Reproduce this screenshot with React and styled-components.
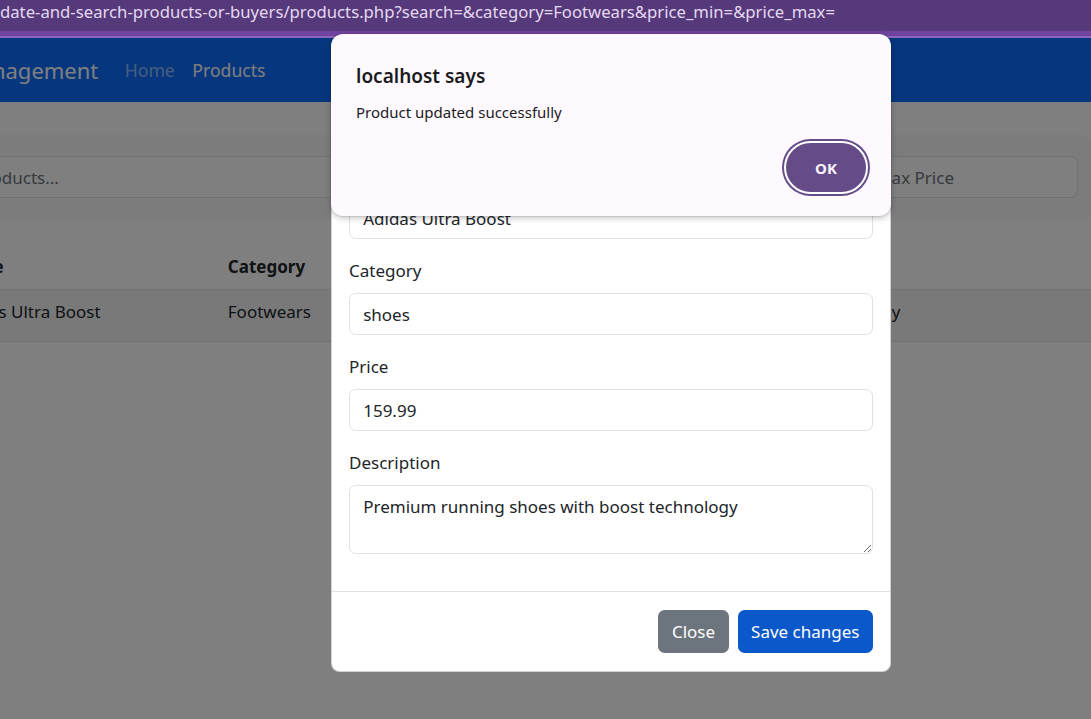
import React from 'react';
import styled, { createGlobalStyle } from 'styled-components';

const FONT = `"Noto Sans", "Open Sans", sans-serif`;
const FS = '17px';

const Global = createGlobalStyle`
  html, body { margin: 0; padding: 0; }
  body { font-family: ${FONT}; width: 1091px; height: 719px; overflow: hidden; background: #fff; color: #212529; }
  * { box-sizing: border-box; }
`;

const Screen = styled.div`
  position: relative;
  width: 1091px;
  height: 719px;
  overflow: hidden;
  display: flex;
  flex-direction: column;
`;

const AddressBar = styled.div`
  height: 31px;
  flex: none;
  background: #56397a;
  color: #e4d8f0;
  font-size: 16.7px;
  line-height: 24px;
  white-space: nowrap;
  overflow: hidden;
`;

const TabStripe = styled.div`
  height: 7px;
  flex: none;
  background: #7043a0;
  border-bottom: 2px solid #8d66b9;
`;

const Viewport = styled.div`
  position: relative;
  flex: 1;
  overflow: hidden;
  background: #fff;
`;

const Page = styled.div`
  margin-left: -140px;
  width: 1250px;
`;

const Navbar = styled.nav`
  display: flex;
  align-items: center;
  height: 64px;
  padding: 0 13px;
  background: #0d6efd;
`;

const Brand = styled.span`
  font-size: 22px;
  color: #fff;
  margin-right: 17.6px;
`;

const NavLink = styled.span`
  font-size: 17.6px;
  padding: 0 8.8px;
  color: ${p => (p.$active ? '#fff' : 'rgba(255,255,255,.55)')};
`;

const Container = styled.div`
  padding: 33px 19px 0 29px;
`;

const FilterBand = styled.div`
  display: flex;
  gap: 13px;
  padding: 21px 13px 22px;
  background: #f8f9fa;
  border-radius: 6px;
`;

const FilterInput = styled.input`
  height: 42px;
  flex: ${p => (p.$grow ? 1 : 'none')};
  width: ${p => p.$w || 'auto'};
  border: 1px solid #dee2e6;
  border-radius: 6.6px;
  padding: 0 13.2px;
  font: inherit;
  font-size: ${FS};
  color: #212529;
  background: #fff;
  &::placeholder { color: #6c757d; }
`;

const Table = styled.table`
  margin-top: 25px;
  width: 100%;
  border-collapse: collapse;
  table-layout: fixed;
  font-size: ${FS};
`;

const Th = styled.th`
  text-align: left;
  font-weight: 700;
  padding: 8.8px;
  line-height: 26.4px;
  border-bottom: 1px solid #dee2e6;
  width: ${p => p.$w || 'auto'};
  white-space: nowrap;
  overflow: hidden;
`;

const Td = styled.td`
  padding: 8.8px 8.8px 16px;
  line-height: 26.4px;
  border-bottom: 1px solid #dee2e6;
  background: #f2f2f2;
  white-space: nowrap;
  vertical-align: top;
`;

const Backdrop = styled.div`
  position: absolute;
  inset: 0;
  background: rgba(0, 0, 0, 0.5);
`;

const ModalLayer = styled.div`
  position: absolute;
  inset: 0;
  display: flex;
  align-items: flex-start;
  padding: 36px 0 0 331px;
`;

const Modal = styled.div`
  width: 560px;
  background: #fff;
  border: 1px solid rgba(0, 0, 0, 0.175);
  border-radius: 8.8px;
  display: flex;
  flex-direction: column;
`;

const ModalHeader = styled.div`
  height: 68px;
  display: flex;
  align-items: center;
  justify-content: space-between;
  padding: 0 17px;
  border-bottom: 1px solid #dee2e6;
`;

const ModalTitle = styled.h5`
  margin: 0;
  font-size: 22px;
  font-weight: 500;
`;

const CloseX = styled.span`
  font-size: 22px;
  color: #666;
`;

const ModalBody = styled.div`
  padding: 18px 17px 37px;
  display: flex;
  flex-direction: column;
  gap: 18px;
`;

const Field = styled.div`
  display: flex;
  flex-direction: column;
`;

const Label = styled.label`
  font-size: ${FS};
  line-height: 27px;
  margin-bottom: 9px;
  color: #212529;
`;

const Input = styled.input`
  height: 42px;
  border: 1px solid #dee2e6;
  border-radius: 6.6px;
  padding: 0 13.2px;
  font: inherit;
  font-size: ${FS};
  color: #212529;
  background: #fff;
  outline: none;
`;

const TextArea = styled.textarea`
  height: 69px;
  border: 1px solid #dee2e6;
  border-radius: 6.6px;
  padding: 7.5px 13.2px;
  font: inherit;
  font-size: ${FS};
  line-height: 26.4px;
  color: #212529;
  background: #fff;
  outline: none;
  resize: vertical;
`;

const ModalFooter = styled.div`
  display: flex;
  justify-content: flex-end;
  gap: 9px;
  padding: 18px 17px;
  border-top: 1px solid #dee2e6;
`;

const Button = styled.button`
  height: 43px;
  padding: 0 13.5px;
  border: none;
  border-radius: 6.6px;
  font: inherit;
  font-size: ${FS};
  color: #fff;
  background: ${p => (p.$variant === 'primary' ? '#0b58ca' : '#6c757d')};
`;

const Alert = styled.div`
  position: absolute;
  left: 331px;
  top: 34px;
  width: 560px;
  height: 182px;
  background: #fef9fe;
  border-radius: 12px;
  box-shadow: 0 2px 6px rgba(0, 0, 0, 0.25), 0 0 0 1px rgba(0, 0, 0, 0.06);
  padding: 30px 21px 20px 25px;
  display: flex;
  flex-direction: column;
`;

const AlertTitle = styled.div`
  font-size: 19px;
  line-height: 24px;
  font-weight: 600;
  color: #1b1b1f;
`;

const AlertMessage = styled.div`
  margin-top: 14px;
  font-size: 15px;
  line-height: 20px;
  color: #1b1b1f;
`;

const AlertActions = styled.div`
  margin-top: 17px;
  display: flex;
  justify-content: flex-end;
  padding-right: 2px;
`;

const OkButton = styled.button`
  width: 84px;
  height: 53px;
  margin-top: 2px;
  border-radius: 27px;
  border: 2px solid #fff;
  box-shadow: 0 0 0 2px #654c89;
  background: #654c89;
  color: #fbf4ff;
  font: inherit;
  font-size: 15px;
  font-weight: 700;
`;

export default function App() {
  return (
    <Screen>
      <Global />
      <AddressBar>date-and-search-products-or-buyers/products.php?search=&amp;category=Footwears&amp;price_min=&amp;price_max=</AddressBar>
      <TabStripe />
      <Viewport>
        <Page>
          <Navbar>
            <Brand>Product Management</Brand>
            <NavLink>Home</NavLink>
            <NavLink $active>Products</NavLink>
          </Navbar>
          <Container>
            <FilterBand>
              <FilterInput $grow placeholder="Search products..." readOnly />
              <FilterInput $w="200px" placeholder="Category" readOnly />
              <FilterInput $w="200px" placeholder="Min Price" readOnly />
              <FilterInput $w="216px" placeholder="Max Price" readOnly />
            </FilterBand>
            <Table>
              <thead>
                <tr>
                  <Th $w="55px">ID</Th>
                  <Th $w="275px">Name</Th>
                  <Th $w="111px">Category</Th>
                  <Th $w="187px">Price</Th>
                  <Th>Description</Th>
                </tr>
              </thead>
              <tbody>
                <tr>
                  <Td>1</Td>
                  <Td>Adidas Ultra Boost</Td>
                  <Td>Footwears</Td>
                  <Td>$159.99</Td>
                  <Td>Premium running shoes with boost technology</Td>
                </tr>
              </tbody>
            </Table>
          </Container>
        </Page>
        <Backdrop />
        <ModalLayer>
          <Modal>
            <ModalHeader>
              <ModalTitle>Edit Product</ModalTitle>
              <CloseX>×</CloseX>
            </ModalHeader>
            <ModalBody>
              <Field>
                <Label>Name</Label>
                <Input readOnly value="Adidas Ultra Boost" />
              </Field>
              <Field>
                <Label>Category</Label>
                <Input readOnly value="shoes" />
              </Field>
              <Field>
                <Label>Price</Label>
                <Input readOnly value="159.99" />
              </Field>
              <Field>
                <Label>Description</Label>
                <TextArea readOnly value="Premium running shoes with boost technology" />
              </Field>
            </ModalBody>
            <ModalFooter>
              <Button>Close</Button>
              <Button $variant="primary">Save changes</Button>
            </ModalFooter>
          </Modal>
        </ModalLayer>
      </Viewport>
      <Alert>
        <AlertTitle>localhost says</AlertTitle>
        <AlertMessage>Product updated successfully</AlertMessage>
        <AlertActions>
          <OkButton>OK</OkButton>
        </AlertActions>
      </Alert>
    </Screen>
  );
}
